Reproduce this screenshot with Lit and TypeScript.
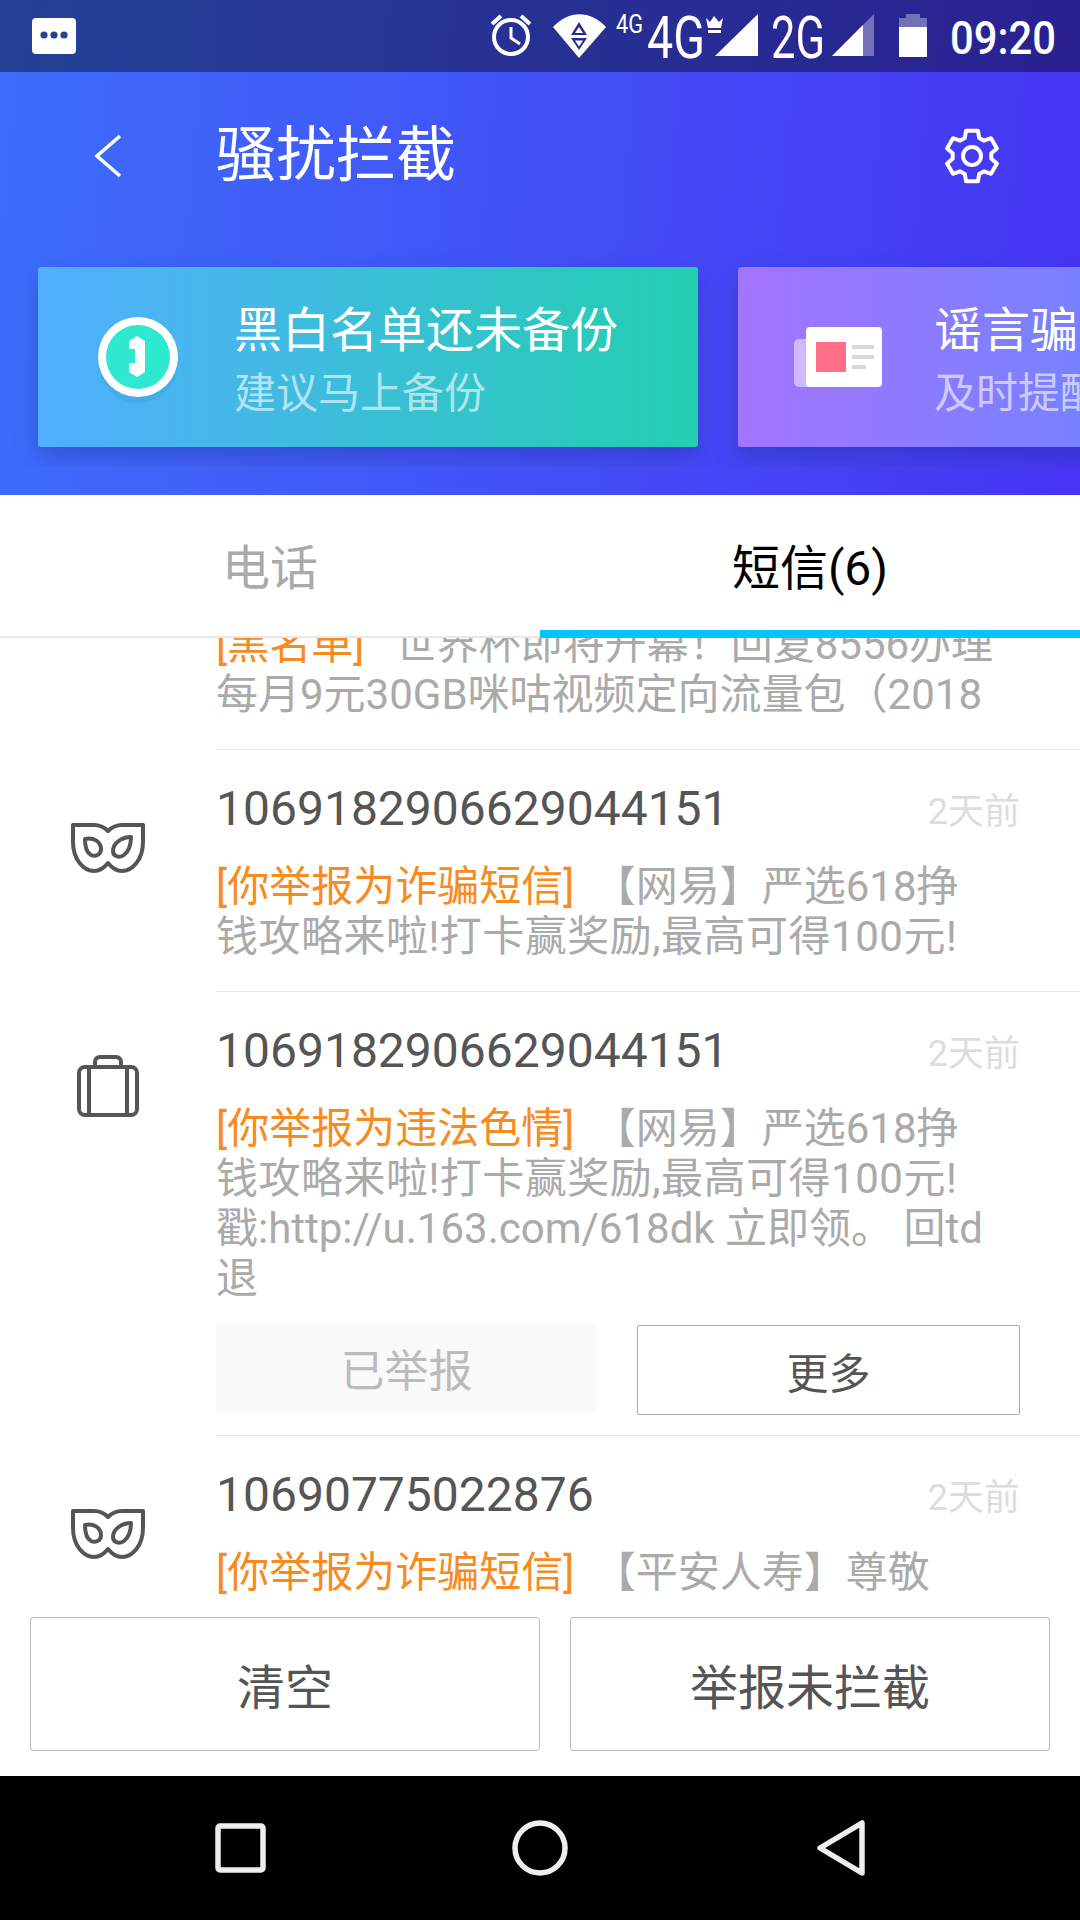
import { LitElement, html, css, svg } from 'lit';
import { customElement } from 'lit/decorators.js';

const maskIcon = html`<svg class="row-icon" width="76" height="52" viewBox="0 0 76 52" fill="none" stroke="#555" stroke-width="4" stroke-linejoin="round">
  <path d="M3 3 H24 C30 3 34 5 38 9 C42 5 46 3 52 3 H73 V20 C73 38 62 49 52 49 C46 49 42 46 38 41 C34 46 30 49 24 49 C14 49 3 38 3 20 Z"/>
  <path d="M15 17 C24 15 31 20 31 27 C31 33 25 35 21 33 C17 31 15 25 15 17 Z"/>
  <path d="M61 15 C52 15 43 21 43 29 C43 35 50 36 54 33 C59 29 61 23 61 15 Z"/>
</svg>`;

const caseIcon = html`<svg class="row-icon case" width="62" height="62" viewBox="0 0 62 62" fill="none" stroke="#555" stroke-width="4" stroke-linejoin="round">
  <rect x="2" y="12" width="58" height="48" rx="6"/>
  <path d="M12 12 V60 M50 12 V60"/>
  <path d="M18 12 V7 C18 4 20 2 23 2 H39 C42 2 44 4 44 7 V12"/>
</svg>`;

const gearPath = (() => {
  // six flat teeth, outline only
  const cx = 28, cy = 28, teeth = 6, pts: string[] = [];
  const step = (Math.PI * 2) / teeth;
  for (let i = 0; i < teeth; i++) {
    const a = i * step - Math.PI / 2;
    const add = (r: number, da: number) => {
      const t = a + da * step;
      pts.push(`${(cx + r * Math.cos(t)).toFixed(1)} ${(cy + r * Math.sin(t)).toFixed(1)}`);
    };
    add(26, -0.22);
    add(26, 0.22);
    add(19.5, 0.36);
    add(19.5, 0.64);
  }
  return 'M' + pts.join(' L') + ' Z';
})();

@customElement('app-root')
export class AppRoot extends LitElement {
  static styles = css`
    :host {
      display: block;
      width: 1080px;
      height: 1920px;
      overflow: hidden;
      background: #fff;
      font-family: Roboto, "Noto Sans CJK SC", sans-serif;
    }

    .page {
      display: flex;
      flex-direction: column;
      height: 1920px;
    }

    .top {
      height: 495px;
      flex: none;
      background: linear-gradient(95deg, #3d6efb 0%, #4734f2 100%);
      display: flex;
      flex-direction: column;
    }

    .status {
      height: 72px;
      flex: none;
      background: rgba(0, 0, 0, 0.4);
      display: flex;
      justify-content: space-between;
    }

    .status svg {
      display: block;
    }

    .msg-icon {
      margin: 18px 0 0 32px;
    }

    .app-bar {
      height: 167px;
      flex: none;
      display: flex;
      align-items: center;
      color: #fff;
      font-size: 60px;
    }

    .back {
      width: 216px;
      flex: none;
      padding-left: 94px;
      box-sizing: border-box;
    }

    .back svg,
    .gear {
      display: block;
    }

    .title {
      flex: 1;
      line-height: 80px;
    }

    .gear {
      margin-right: 80px;
    }

    .cards {
      display: flex;
      gap: 40px;
      padding: 28px 0 0 38px;
      overflow: hidden;
      height: 228px;
      box-sizing: border-box;
      flex: none;
    }

    .card {
      flex: none;
      width: 660px;
      height: 180px;
      border-radius: 3px;
      display: flex;
      align-items: center;
      color: #fff;
      box-shadow: 0 10px 22px rgba(30, 50, 140, 0.35);
    }

    .card.green {
      background: linear-gradient(90deg, #52aeff 0%, #22cfb0 100%);
    }

    .card.purple {
      background: linear-gradient(90deg, #a374ff 0%, #4f8eff 100%);
    }

    .card-icon {
      flex: none;
      width: 196px;
      box-sizing: border-box;
      padding-left: 4px;
      display: flex;
      justify-content: center;
    }

    .card-icon svg {
      display: block;
      overflow: visible;
    }

    .card-text {
      padding-top: 10px;
    }

    .card-title {
      font-size: 48px;
      line-height: 63px;
      white-space: nowrap;
    }

    .card-sub {
      font-size: 42px;
      line-height: 63px;
      color: rgba(255, 255, 255, 0.6);
      white-space: nowrap;
    }

    .tabs {
      height: 143px;
      flex: none;
      display: flex;
      box-sizing: border-box;
      border-bottom: 2px solid #e8e8e8;
      background: #fff;
    }

    .tab {
      width: 540px;
      box-sizing: border-box;
      font-size: 48px;
      padding-top: 44px;
      line-height: 60px;
      color: #aaa;
    }

    .tab.phone {
      padding-left: 222px;
    }

    .tab.sms {
      text-align: center;
      color: #000;
      border-bottom: 8px solid #06c5fb;
      height: 143px;
    }

    .list {
      flex: 1;
      min-height: 0;
      overflow: hidden;
    }

    .row {
      display: flex;
    }

    .row:first-child {
      margin-top: -18px;
    }

    .row-side {
      width: 216px;
      flex: none;
      display: flex;
      justify-content: center;
    }

    .row-icon {
      display: block;
      margin-top: 73px;
    }

    .row-icon.case {
      margin-top: 64px;
    }

    .row-main {
      flex: 1;
      min-width: 0;
      border-top: 1px solid #e6e6e6;
      padding: 28px 60px 29px 0;
    }

    .row:first-child .row-main {
      border-top: 0;
      padding-top: 0;
    }

    .row-head {
      display: flex;
      justify-content: space-between;
      align-items: center;
      height: 60px;
      margin-bottom: 24px;
    }

    .number {
      font-size: 48px;
      color: #555;
    }

    .date {
      font-size: 36px;
      color: #ddd;
    }

    .text {
      font-size: 42px;
      line-height: 50px;
      color: #aaa;
      white-space: nowrap;
    }

    .loose {
      letter-spacing: 0.5px;
    }

    .tag {
      color: #f68b1f;
      margin-right: 9px;
    }

    .tag.plain {
      margin-right: 20px;
    }

    .row-actions {
      display: flex;
      align-items: flex-start;
      gap: 40px;
      margin: 19px 0 -9px;
    }

    .row-btn {
      flex: 1;
      height: 90px;
      border-radius: 2px;
      box-sizing: border-box;
      font-size: 42px;
      display: flex;
      align-items: center;
      justify-content: center;
    }

    .row-btn.done {
      background: #f9f9f9;
      color: #bbb;
      font-size: 44px;
    }

    .row-btn.more {
      margin-top: 2px;
      border: 1px solid #aaa;
      color: #555;
    }

    .actions {
      flex: none;
      background: #fff;
      display: flex;
      gap: 30px;
      padding: 17px 30px 25px;
    }

    .action {
      height: 134px;
      box-sizing: border-box;
      border: 1px solid #bbb;
      border-radius: 3px;
      font-size: 48px;
      color: #555;
      display: flex;
      align-items: center;
      justify-content: center;
    }

    .action.clear {
      width: 510px;
    }

    .action.report {
      width: 480px;
    }

    .nav {
      height: 144px;
      flex: none;
      background: #000;
    }

    .nav svg {
      display: block;
    }
  `;

  render() {
    return html`
      <div class="page">
        <div class="top">
          <div class="status">
            <svg class="msg-icon" width="44" height="36" viewBox="0 0 44 36">
              <rect width="44" height="36" rx="4" fill="#fff" />
              <circle cx="12" cy="17" r="3.6" fill="#27408f" />
              <circle cx="22" cy="17" r="3.6" fill="#27408f" />
              <circle cx="32" cy="17" r="3.6" fill="#27408f" />
            </svg>
            ${this.statusRight()}
          </div>
          <div class="app-bar">
            <div class="back">
              <svg width="28" height="44" viewBox="0 0 28 44" fill="none" stroke="#fff" stroke-width="3.5">
                <path d="M26 2 L3 22 L26 42" />
              </svg>
            </div>
            <div class="title">骚扰拦截</div>
            <svg class="gear" width="56" height="56" viewBox="0 0 56 56" fill="none" stroke="#fff" stroke-width="4" stroke-linejoin="round">
              <path d=${gearPath} />
              <circle cx="28" cy="28" r="9" />
            </svg>
          </div>
          <div class="cards">
            <div class="card green">
              <div class="card-icon">
                <svg width="80" height="80" viewBox="0 0 80 80">
                  <circle cx="40" cy="46" r="40" fill="#1b8fb8" opacity="0.16" />
                  <circle cx="40" cy="40" r="40" fill="#fff" />
                  <circle cx="40" cy="40" r="32" fill="#2ee8d0" />
                  <path d="M39 19 L47 24 V55 L39 60 L31 55 V46 H37 V32 H31 V24 Z" fill="#fff" />
                </svg>
              </div>
              <div class="card-text">
                <div class="card-title">黑白名单还未备份</div>
                <div class="card-sub">建议马上备份</div>
              </div>
            </div>
            <div class="card purple">
              <div class="card-icon">
                <svg width="88" height="60" viewBox="0 0 88 60">
                  <rect x="0" y="12" width="24" height="48" rx="5" fill="#fff" opacity="0.5" />
                  <rect x="12" y="0" width="76" height="60" rx="4" fill="#fff" />
                  <rect x="22" y="15" width="30" height="30" fill="#ff7088" />
                  <rect x="58" y="18" width="22" height="4" fill="#d8d8d8" />
                  <rect x="58" y="28" width="22" height="4" fill="#d8d8d8" />
                  <rect x="58" y="38" width="14" height="4" fill="#d8d8d8" />
                </svg>
              </div>
              <div class="card-text">
                <div class="card-title">谣言骗术早知道</div>
                <div class="card-sub">及时提醒防上当</div>
              </div>
            </div>
          </div>
        </div>

        <div class="tabs">
          <div class="tab phone">电话</div>
          <div class="tab sms">短信(6)</div>
        </div>

        <div class="list">
          <div class="row">
            <div class="row-side"></div>
            <div class="row-main">
              <div class="text"><span class="tag plain">[黑名单]</span> 世界杯即将开幕！回复8556办理<br />每月9元30GB咪咕视频定向流量包（2018</div>
            </div>
          </div>
          <div class="row">
            <div class="row-side">${maskIcon}</div>
            <div class="row-main">
              <div class="row-head"><span class="number">1069182906629044151</span><span class="date">2天前</span></div>
              <div class="text"><span class="tag">[你举报为诈骗短信]</span> 【网易】严选618挣<br /><span class="loose">钱攻略来啦!打卡赢奖励,最高可得100元!</span></div>
            </div>
          </div>
          <div class="row">
            <div class="row-side">${caseIcon}</div>
            <div class="row-main">
              <div class="row-head"><span class="number">1069182906629044151</span><span class="date">2天前</span></div>
              <div class="text"><span class="tag">[你举报为违法色情]</span> 【网易】严选618挣<br /><span class="loose">钱攻略来啦!打卡赢奖励,最高可得100元!</span><br />戳:http://u.163.com/618dk 立即领。 回td<br />退</div>
              <div class="row-actions">
                <div class="row-btn done">已举报</div>
                <div class="row-btn more">更多</div>
              </div>
            </div>
          </div>
          <div class="row">
            <div class="row-side">${maskIcon}</div>
            <div class="row-main">
              <div class="row-head"><span class="number">10690775022876</span><span class="date">2天前</span></div>
              <div class="text"><span class="tag">[你举报为诈骗短信]</span> 【平安人寿】尊敬</div>
            </div>
          </div>
        </div>

        <div class="actions">
          <div class="action clear">清空</div>
          <div class="action report">举报未拦截</div>
        </div>

        <div class="nav">
          <svg width="1080" height="144" viewBox="0 1776 1080 144" fill="none" stroke="#eee" stroke-width="5.5" stroke-linejoin="round">
            <rect x="218" y="1826" width="45" height="44" rx="2" />
            <circle cx="540" cy="1848" r="25" />
            <path d="M820 1848 L862 1823 V1873 Z" />
          </svg>
        </div>
      </div>
    `;
  }

  statusRight() {
    return svg`<svg width="600" height="72" viewBox="480 0 600 72" fill="#fff" font-family="Roboto, sans-serif">
      <g fill="none" stroke="#fff" stroke-width="4">
        <circle cx="511" cy="37" r="17" />
        <path d="M511 27 V38 L520 44" stroke-width="3" />
        <path d="M492 24 L501 16 M530 24 L521 16" />
      </g>
      <path d="M553 27 C569 10 590 10 606 27 L579 58 Z" />
      <path d="M579 22 L571 35 H587 Z M571 38 H587 L579 50 Z" fill="#2a2a90" />
      <path d="M579 27 L575 33 H583 Z M575 40.5 H583 L579 46.5 Z" />
      <text x="616" y="33" font-size="26" textLength="27" lengthAdjust="spacingAndGlyphs">4G</text>
      <text x="647" y="58" font-size="60" textLength="58" lengthAdjust="spacingAndGlyphs">4G</text>
      <path d="M706 18 L710 22 L714 16 L719 22 L723 18 L721 28 H708 Z M708 30 H721 V33 H708 Z" />
      <path d="M715 56 L758 14 V56 Z" />
      <text x="771" y="58" font-size="60" textLength="54" lengthAdjust="spacingAndGlyphs">2G</text>
      <path d="M832 56 L874 14 V56 Z" opacity="0.35" />
      <path d="M832 56 L863 25 V56 Z" />
      <path d="M906 14 H920 V18 H927 V27 H899 V18 H906 Z" opacity="0.35" />
      <path d="M899 27 H927 V57 H899 Z" />
      <text x="950" y="54" font-size="46" font-weight="500" textLength="106" lengthAdjust="spacingAndGlyphs">09:20</text>
    </svg>`;
  }
}
